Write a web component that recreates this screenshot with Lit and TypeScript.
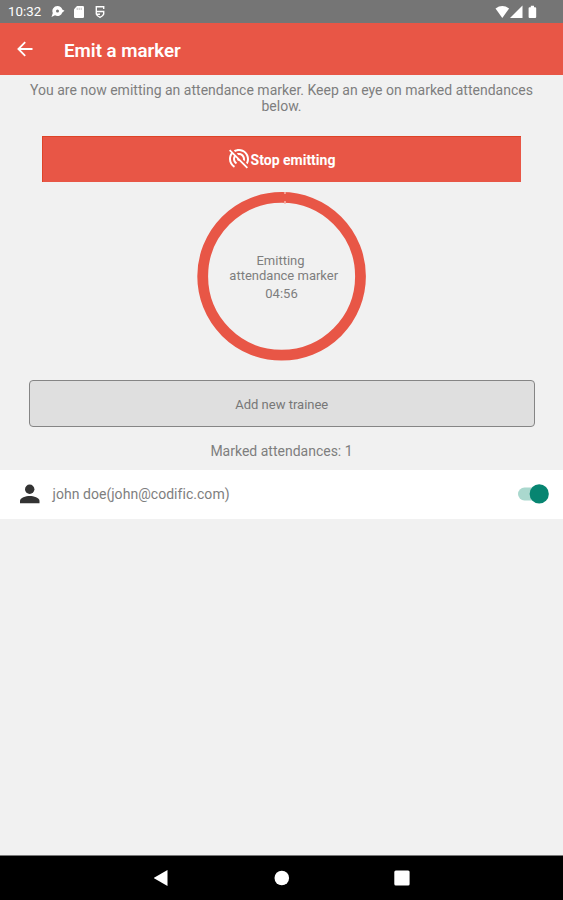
import { LitElement, html, css } from "lit";
import { customElement, state } from "lit/decorators.js";

@customElement("app-root")
export class AppRoot extends LitElement {
  @state() private remaining = "04:56";
  @state() private trainees = [{ name: "john doe", email: "john@codific.com", on: true }];

  static styles = css`
    :host {
      display: flex;
      flex-direction: column;
      height: 900px;
      overflow: hidden;
      background: #f1f1f1;
      color: #7e7e7e;
      font-family: Roboto, sans-serif;
      font-size: 14px;
      line-height: 16px;
    }
    * { box-sizing: border-box; }
    svg { display: block; flex: none; }
    .status {
      display: flex;
      align-items: center;
      height: 23px;
      flex: none;
      padding: 1px 25px 0 8px;
      background: #757575;
      color: #fff;
    }
    .clock { width: 43px; font-size: 13.3px; white-space: nowrap; }
    .grow { flex: 1; }
    .bar {
      display: flex;
      align-items: center;
      height: 52px;
      flex: none;
      padding-left: 15px;
      background: #e85646;
      color: #fff;
    }
    .bar h1 {
      margin: 3px 0 0 29px;
      font-size: 18.7px;
      line-height: 24px;
      font-weight: 600;
    }
    .intro { margin: 7px 20px 0; height: 32px; text-align: center; white-space: nowrap; letter-spacing: 0.01px; }
    .stop {
      display: flex;
      align-items: center;
      justify-content: center;
      height: 46px;
      margin: 22px 42px 0;
      flex: none;
      padding: 0 0 1px;
      border: 0;
      border-top: 1px solid #dd4427;
      border-left: 1px solid #dd4427;
      background: #e85646;
      color: #fff;
      font: 700 14px/16px Roboto, sans-serif;
    }
    .stop span { padding-top: 2px; }
    .stop svg { margin-left: -2px; }
    .timer {
      display: grid;
      width: 169px;
      height: 169px;
      flex: none;
      margin: 10px 0 0 197px;
    }
    .timer > * { grid-area: 1 / 1; }
    .caption {
      align-self: start;
      padding: 61px 2px 0 0;
      text-align: center;
      font-size: 13px;
      line-height: 15px;
    }
    .time { padding: 3px 0 0 2px; }
    .add {
      height: 47px;
      flex: none;
      margin: 19px 28px 0 28.5px;
      border: 1px solid #858585;
      border-radius: 4px;
      background: #dfdfdf;
      color: #777;
      padding: 2px 0 0;
      font: 400 13px/16px Roboto, sans-serif;
    }
    .count { margin-top: 16px; height: 27px; text-align: center; }
    .row {
      display: flex;
      align-items: center;
      height: 49px;
      flex: none;
      padding: 0 14px 1px 20px;
      background: #fff;
    }
    .who { margin-left: 12.5px; flex: 1; letter-spacing: 0.04px; }
    .nav {
      display: flex;
      align-items: center;
      justify-content: center;
      gap: 104px;
      height: 45px;
      flex: none;
      margin-top: auto;
      border-top: 1px solid #777;
      background: #000;
    }
  `;

  private row(t: { name: string; email: string; on: boolean }) {
    return html`<div class="row">
      <svg width="20" height="20" viewBox="0 0 20 20" fill="#333">
        <circle cx="9.7" cy="5.2" r="4.7" />
        <path d="M0 19.2v-2.3c0-3.1 5.8-4.9 9.7-4.9s9.8 1.8 9.8 4.9v2.3z" />
      </svg>
      <span class="who">${t.name}(${t.email})</span>
      <svg width="31" height="20" viewBox="0 0 31 20">
        <rect x="0" y="3.5" width="26" height="13" rx="6.5" fill=${t.on ? "#aad8ce" : "#bbb"} />
        <circle cx="21.2" cy="9.9" r="9.6" fill=${t.on ? "#078571" : "#eee"} />
      </svg>
    </div>`;
  }

  render() {
    return html`
      <div class="status">
        <span class="clock">10:32</span>
        <svg width="56" height="14" viewBox="0 0 56 14" fill="#fff">
          <path fill-rule="evenodd" d="M6.500 1a5 5 0 0 1 4.800 3.600l2.200 1.200-2.200 1.700A5 5 0 0 1 4 10.300L.5 12l1.300-4A5 5 0 0 1 6.500 1zM6.500 4.400a1.500 1.500 0 1 0 0 3a1.500 1.500 0 0 0 0-3z" />
          <path d="M26 1h5.800q1.200 0 1.200 1.200v9.600q0 1.200-1.200 1.200h-7.600q-1.200 0-1.200-1.200V4.200z" />
          <path d="M26.200 2.800v2.200M28.200 2.800v2.200M30.200 2.800v2.200" stroke="#757575" stroke-opacity=".6" stroke-width=".8" />
          <path d="M52.700 3.900V1.700h-7.400v4.800h7.400v2.600q-.8 2.300-3.700 3.300q-2.900-1-3.700-3.300V6.500M45.300 9.200h3.700" fill="none" stroke="#fff" stroke-width="1.400" />
        </svg>
        <span class="grow"></span>
        <svg width="43" height="14" viewBox="0 0 43 14" fill="#fff">
          <path d="M.5 3.500q6.800-4.800 13.600 0L7.300 13z" />
          <path d="M27.500 .5V13H15z" />
          <path d="M35.800 .8h3.200v1.400h1.200q1 0 1 1V12q0 1-1 1h-5.600q-1 0-1-1V3.200q0-1 1-1h1.200z" />
        </svg>
      </div>
      <div class="bar">
        <svg width="20" height="20" viewBox="0 0 20 20" fill="none" stroke="#fff" stroke-width="1.8">
          <path d="M17.500 10H4M10.200 3.200 3.400 10l6.800 6.800" />
        </svg>
        <h1>Emit a marker</h1>
      </div>
      <div class="intro">You are now emitting an attendance marker. Keep an eye on marked attendances<br />below.</div>
      <button class="stop">
        <svg width="24" height="24" viewBox="0 0 24 24" fill="#fff">
          <path d="M17.560 14.240c.28-.69.44-1.450.44-2.240 0-3.310-2.690-6-6-6-.79 0-1.550.16-2.240.44l1.620 1.620c.2-.03.41-.06.62-.06 2.210 0 4 1.790 4 4 0 .21-.02.42-.05.63l1.610 1.610zM12 4c4.420 0 8 3.580 8 8 0 1.350-.35 2.620-.95 3.740l1.470 1.470C21.460 15.690 22 13.910 22 12c0-5.520-4.480-10-10-10-1.910 0-3.690.55-5.210 1.470l1.460 1.460C9.370 4.340 10.650 4 12 4zM3.270 2.500 2 3.770l2.100 2.100C2.790 7.570 2 9.690 2 12c0 3.700 2.010 6.920 4.990 8.650l1-1.730C5.610 17.530 4 14.960 4 12c0-1.760.57-3.380 1.530-4.690l1.430 1.440C6.360 9.680 6 10.800 6 12c0 2.220 1.210 4.150 3 5.190l1-1.740c-1.190-.7-2-1.970-2-3.450 0-.65.17-1.250.44-1.790l1.580 1.580L10 12c0 1.100.9 2 2 2l.21-.02.01.01 7.510 7.510L21 20.230 4.270 3.500z" />
        </svg>
        <span>Stop emitting</span>
      </button>
      <div class="timer">
        <svg width="169" height="169" viewBox="0 0 169 169" fill="none">
          <circle cx="84.6" cy="84.3" r="78.9" stroke="#e85646" stroke-width="10.8" />
          <path d="M88 0v2M88 9v3" stroke="#f6b5ac" stroke-width="1.5" />
        </svg>
        <div class="caption">Emitting<br />&nbsp;&nbsp;attendance marker<div class="time">${this.remaining}</div></div>
      </div>
      <button class="add">Add new trainee</button>
      <div class="count">Marked attendances: ${this.trainees.length}</div>
      ${this.trainees.map((t) => this.row(t))}
      <div class="nav">
        <svg width="16" height="18" viewBox="0 0 16 18" fill="#fff"><path d="M13.500 1v16L-.3 9z" /></svg>
        <svg width="16" height="16" viewBox="0 0 16 16" fill="#fff"><circle cx="7.800" cy="8" r="7.300" /></svg>
        <svg width="16" height="16" viewBox="0 0 16 16" fill="#fff"><rect x=".3" y=".5" width="15.300" height="15" rx="1.500" /></svg>
      </div>
    `;
  }
}
